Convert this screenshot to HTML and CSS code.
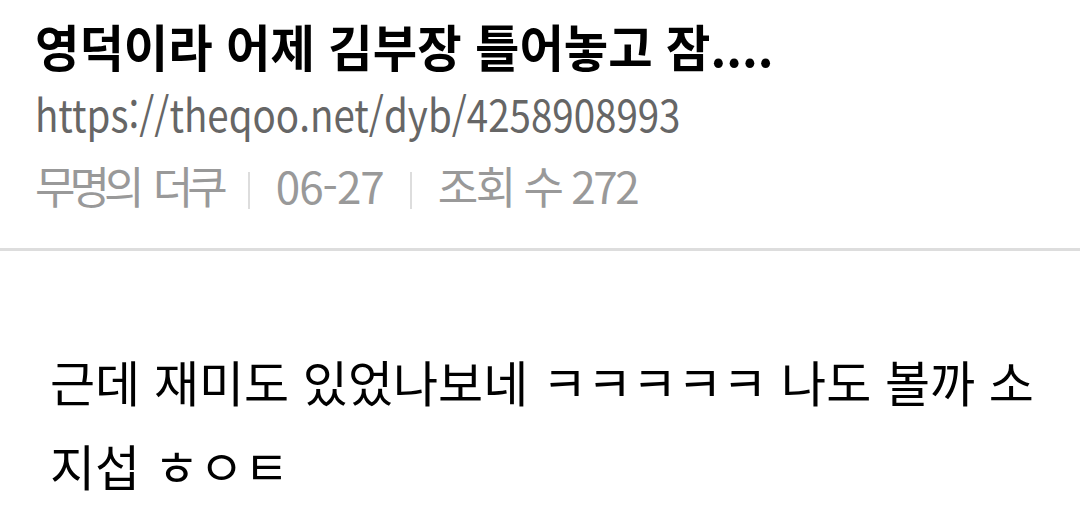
FILE: index.html
```html
<!DOCTYPE html>
<html lang="ko">
<head>
    <meta charset="UTF-8">
    <meta name="viewport" content="width=device-width, initial-scale=1.0">
    <title>영덕이라 어제 김부장 틀어놓고 잠</title>
    <link rel="stylesheet" href="styles.css">
</head>
<body>
    <div class="header">
        <h1 class="title"><span class="narrow">영덕이라 어제 김부장 틀어놓고 잠....</span></h1>
        <div class="url"><span class="narrow">https://theqoo.net/dyb/4258908993</span></div>
        <div class="meta">
            <span class="meta-name">무명의 더쿠</span>
            <span class="sep"></span>
            <span class="meta-date">06-27</span>
            <span class="sep"></span>
            <span class="meta-views">조회 수 272</span>
        </div>
    </div>
    <div class="content">
        <p>근데 재미도 있었나보네 ㅋㅋㅋㅋㅋ 나도 볼까 소<br>지섭 ㅎㅇㅌ</p>
    </div>
</body>
</html>
```

FILE: styles.css
```css
body {
    margin: 0;
    font-family: "Noto Sans CJK KR", "Noto Sans", sans-serif;
    background-color: #fff;
    color: #000;
}

.narrow {
    display: inline-block;
    white-space: nowrap;
    transform-origin: left center;
}

.header {
    padding: 10px 35px 34px;
    border-bottom: 3px solid #ddd;
}

.title {
    margin: 0;
    font-size: 50px;
    font-weight: 700;
    line-height: 70px;
}

.title .narrow {
    transform: scaleX(0.965);
}

.url {
    margin-top: 2px;
    font-size: 44px;
    line-height: 62px;
    color: #666;
}

.url .narrow {
    transform: scaleX(0.875);
}

.meta {
    display: flex;
    align-items: center;
    gap: 26px;
    margin-top: 12px;
    font-size: 44px;
    line-height: 58px;
    color: #999;
    white-space: nowrap;
}

.meta-name {
    letter-spacing: -6px;
    word-spacing: 8px;
}

.meta-date {
    letter-spacing: -1px;
}

.meta-views {
    letter-spacing: -2.5px;
}

.meta .sep {
    width: 2px;
    height: 37px;
    margin-top: 10px;
    background-color: #ddd;
}

.content {
    padding: 88px 50px 0;
}

.content p {
    margin: 0;
    font-size: 49px;
    line-height: 84px;
    white-space: nowrap;
}
```
